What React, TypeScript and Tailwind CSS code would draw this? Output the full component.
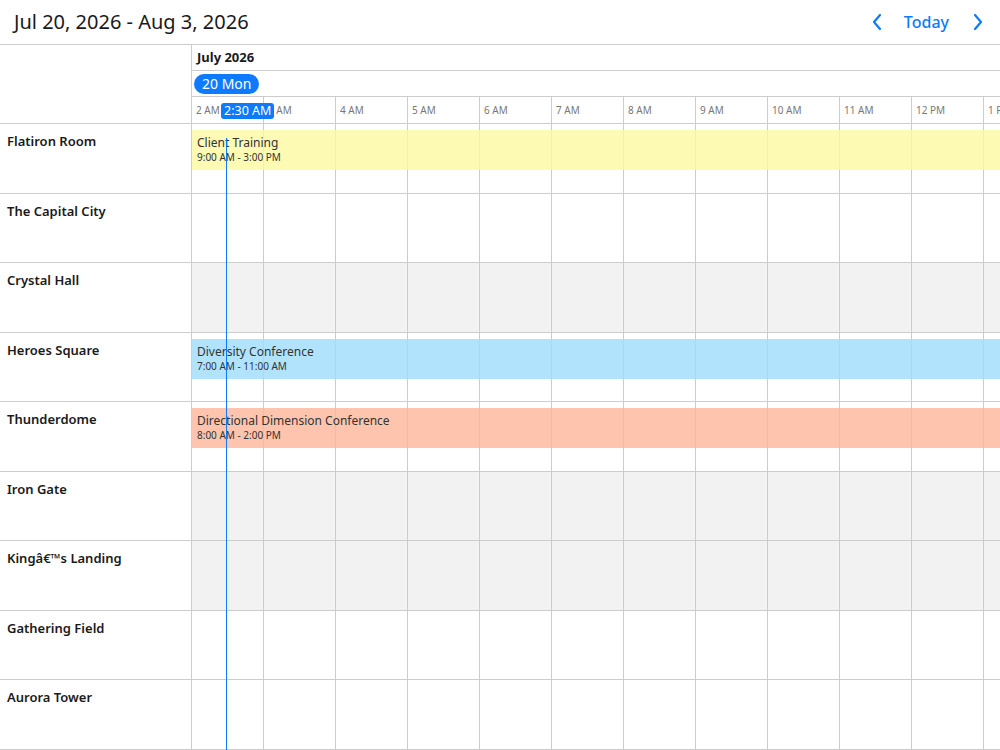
import React from 'react';

const hours = ['2 AM', '3 AM', '4 AM', '5 AM', '6 AM', '7 AM', '8 AM', '9 AM', '10 AM', '11 AM', '12 PM', '1 PM'];

interface Resource {
  name: string;
  shaded?: boolean;
  event?: { title: string; time: string; color: string };
}

const resources: Resource[] = [
  { name: 'Flatiron Room', event: { title: 'Client Training', time: '9:00 AM - 3:00 PM', color: 'bg-[rgba(253,249,160,0.8)]' } },
  { name: 'The Capital City' },
  { name: 'Crystal Hall', shaded: true },
  { name: 'Heroes Square', event: { title: 'Diversity Conference', time: '7:00 AM - 11:00 AM', color: 'bg-[rgba(157,221,251,0.8)]' } },
  { name: 'Thunderdome', event: { title: 'Directional Dimension Conference', time: '8:00 AM - 2:00 PM', color: 'bg-[rgba(254,181,153,0.8)]' } },
  { name: 'Iron Gate', shaded: true },
  { name: 'Kingâ€™s Landing', shaded: true },
  { name: 'Gathering Field' },
  { name: 'Aurora Tower' },
];

function Chevron({ dir }: { dir: 'left' | 'right' }) {
  return (
    <svg width="12" height="18" viewBox="0 0 12 18" fill="none" stroke="#0d7aff" strokeWidth="2.2" strokeLinecap="round" strokeLinejoin="round">
      {dir === 'left' ? <path d="M9 2 L3 9 L9 16" /> : <path d="M3 2 L9 9 L3 16" />}
    </svg>
  );
}

export default function App() {
  return (
    <div className="w-[1000px] h-[750px] overflow-hidden bg-white text-[#1a1a1a]" style={{ fontFamily: '"Noto Sans", "Open Sans", sans-serif' }}>
      {/* Toolbar */}
      <div className="h-[45px] flex items-center justify-between pl-[14px] pr-[14px] border-b border-[#cccccc]">
        <div className="text-[20px] leading-none">Jul 20, 2026 - Aug 3, 2026</div>
        <div className="flex items-center">
          <button className="px-[2px]"><Chevron dir="left" /></button>
          <button className="ml-[19px] mr-[21px] text-[16px] font-medium text-[#0d7aff]">Today</button>
          <button className="px-[2px]"><Chevron dir="right" /></button>
        </div>
      </div>

      <div className="flex">
        {/* Resource column */}
        <div className="w-[192px] shrink-0 border-r border-[#cccccc]">
          <div className="h-[79px] border-b border-[#cccccc]" />
          {resources.map((r) => (
            <div key={r.name} className="h-[69.5px] border-b border-[#cccccc] pl-[7px] pt-[8px] text-[13px] font-semibold leading-[18px]">
              {r.name}
            </div>
          ))}
        </div>

        {/* Timeline */}
        <div className="relative flex-1 overflow-hidden">
          <div className="h-[26px] border-b border-[#cccccc] pl-[5px] flex items-center text-[13px] font-bold">July 2026</div>
          <div className="h-[26px] border-b border-[#cccccc] pl-[2px] flex items-center">
            <span className="h-[20px] px-[8px] rounded-full bg-[#0d7aff] text-white text-[14px] leading-[20px]">20 Mon</span>
          </div>
          <div className="h-[27px] border-b border-[#cccccc] flex">
            {hours.map((h) => (
              <div key={h} className="w-[72px] shrink-0 border-r border-[#cccccc] pl-[4px] flex items-center text-[10px] text-[#777777]">
                {h}
              </div>
            ))}
          </div>
          {resources.map((r) => (
            <div key={r.name} className={`relative h-[69.5px] border-b border-[#cccccc] flex ${r.shaded ? 'bg-[#f2f2f2]' : ''}`}>
              {hours.map((h) => (
                <div key={h} className="w-[72px] shrink-0 border-r border-[#cccccc]" />
              ))}
              {r.event && (
                <div className={`absolute left-0 right-0 top-[6px] h-[40px] pl-[5px] pt-[5px] ${r.event.color}`}>
                  <div className="text-[12px] leading-[15px] text-[#333333]">{r.event.title}</div>
                  <div className="text-[10px] leading-[14px] text-[#333333]">{r.event.time}</div>
                </div>
              )}
            </div>
          ))}

          {/* Current time indicator */}
          <div className="absolute left-[34px] top-[93px] bottom-0 w-px bg-[#0d7aff]" />
          <div className="absolute left-[29px] top-[58px] h-[16px] px-[3px] rounded-[3px] bg-[#0d7aff] text-white text-[12.5px] leading-[16px]">2:30 AM</div>
        </div>
      </div>
    </div>
  );
}
